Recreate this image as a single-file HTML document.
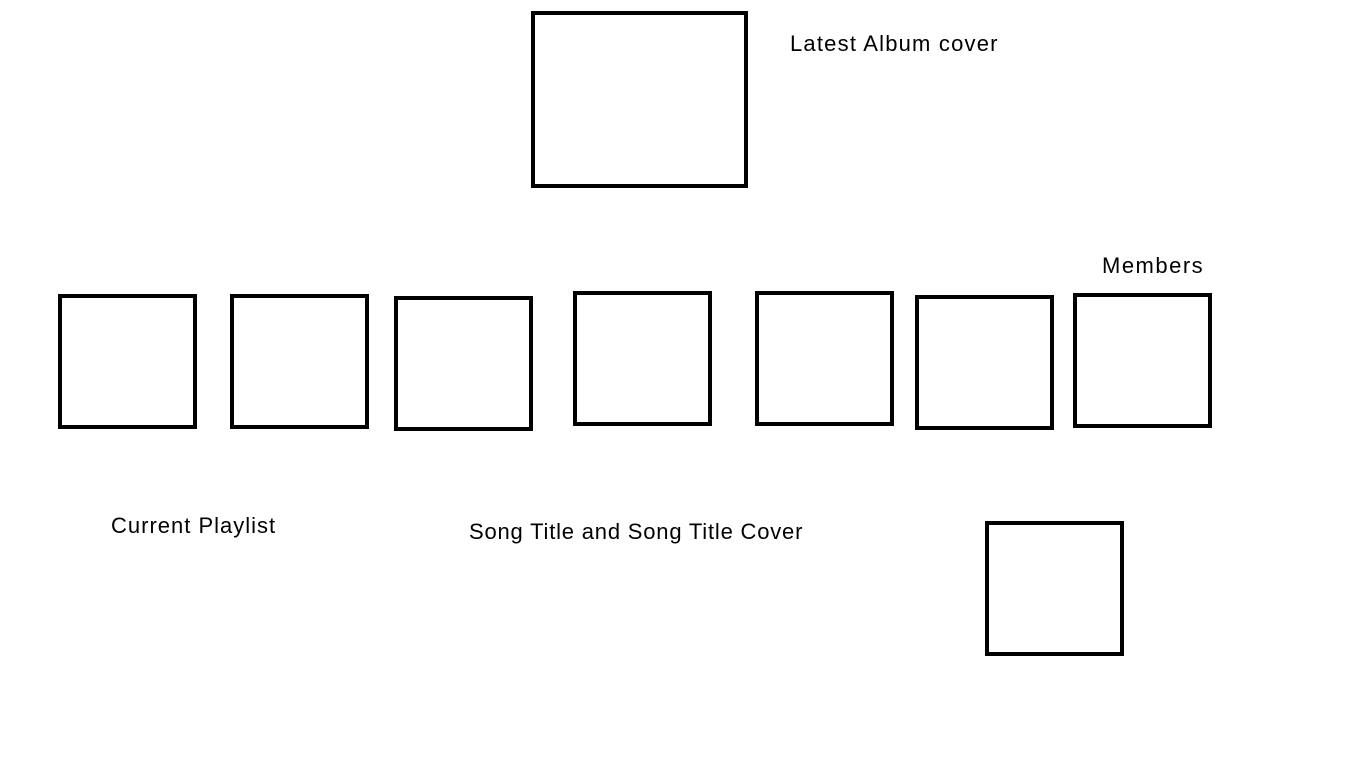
<!DOCTYPE html>
<html><head><style>
body{margin:0;width:1366px;height:768px;background:#fff;position:relative;overflow:hidden;font-family:"Liberation Sans",sans-serif;}
.b{position:absolute;border:4px solid #000;box-sizing:border-box;}
.t{position:absolute;font-size:22px;color:#000;white-space:nowrap;line-height:1;}
</style></head><body>
<div class="b" style="left:531px;top:11px;width:217px;height:177px"></div>
<div class="b" style="left:58px;top:294px;width:139px;height:135px"></div>
<div class="b" style="left:230px;top:294px;width:139px;height:135px"></div>
<div class="b" style="left:394px;top:296px;width:139px;height:135px"></div>
<div class="b" style="left:573px;top:291px;width:139px;height:135px"></div>
<div class="b" style="left:755px;top:291px;width:139px;height:135px"></div>
<div class="b" style="left:915px;top:295px;width:139px;height:135px"></div>
<div class="b" style="left:1073px;top:293px;width:139px;height:135px"></div>
<div class="b" style="left:985px;top:521px;width:139px;height:135px"></div>
<div class="t" style="left:790px;top:33px;letter-spacing:1.2px">Latest Album cover</div>
<div class="t" style="left:1102px;top:255px;letter-spacing:1.5px">Members</div>
<div class="t" style="left:111px;top:515px;letter-spacing:1px">Current Playlist</div>
<div class="t" style="left:469px;top:521px;letter-spacing:0.8px">Song Title and Song Title Cover</div>
</body></html>
